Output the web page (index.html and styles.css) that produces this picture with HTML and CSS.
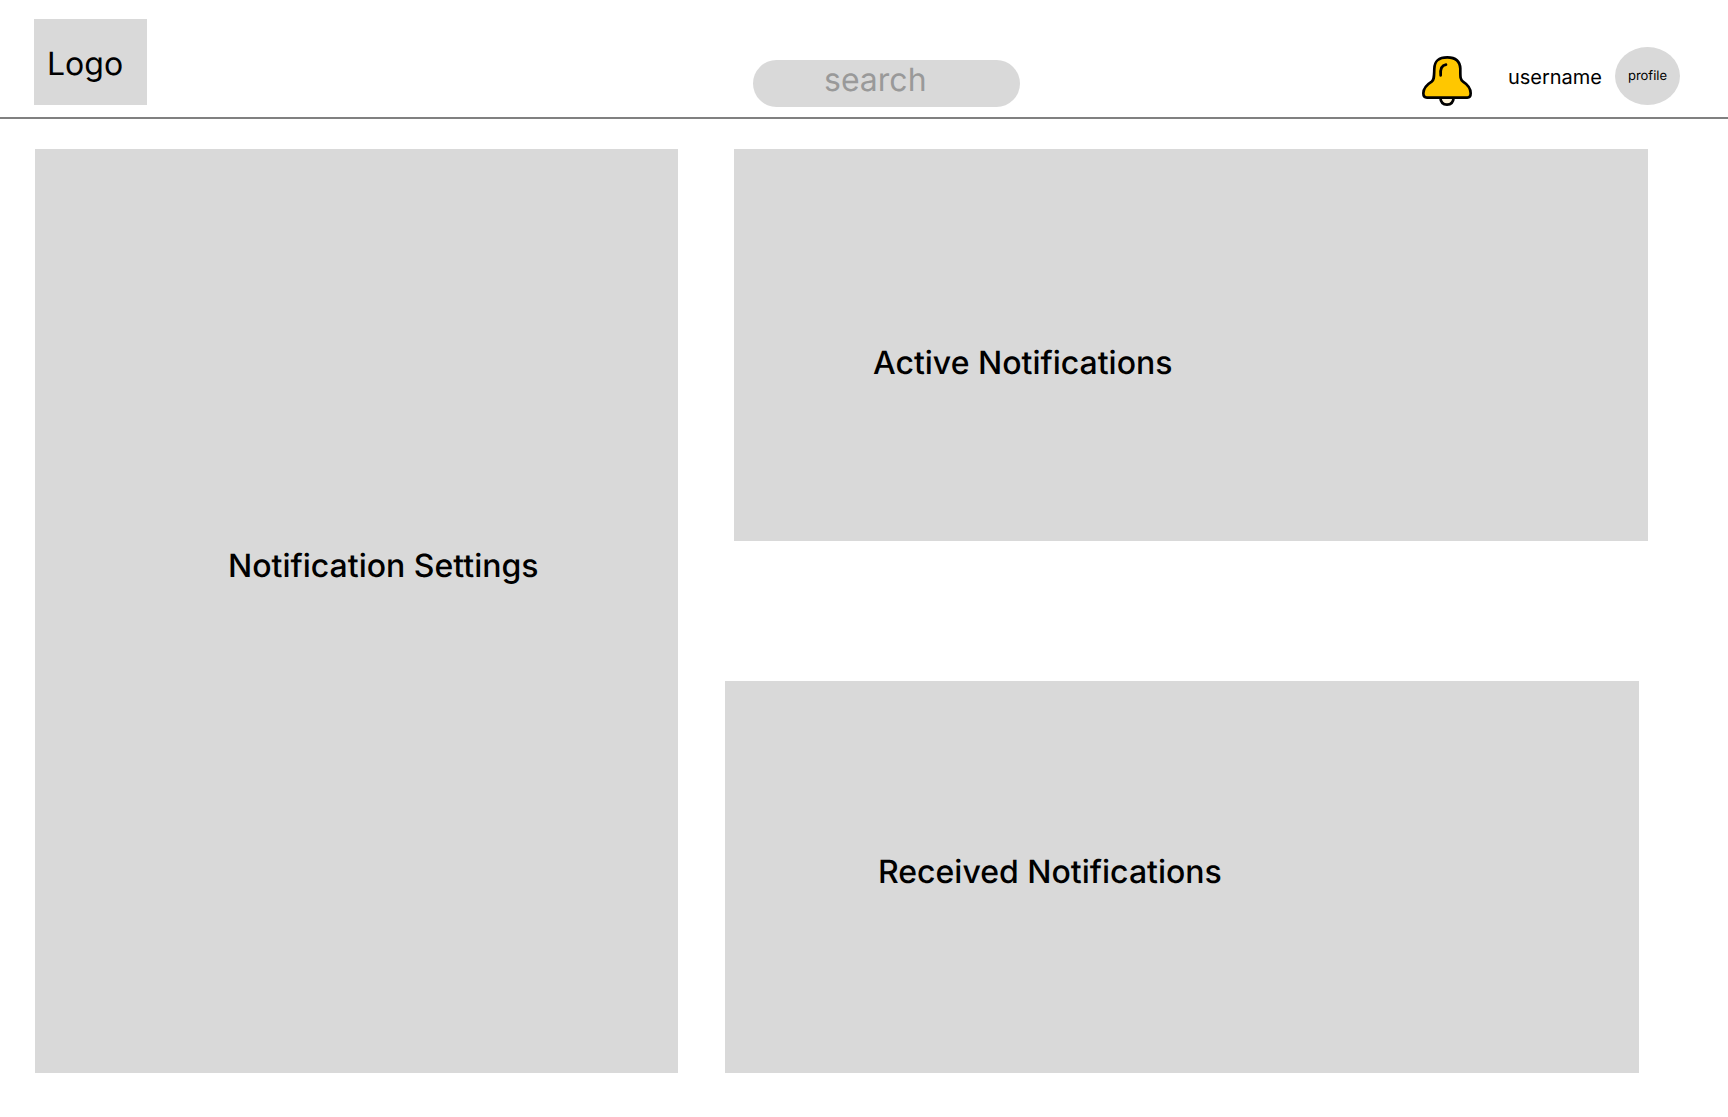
FILE: index.html
```html
<!DOCTYPE html>
<html lang="en">
<head>
  <meta charset="utf-8">
  <meta name="viewport" content="width=device-width, initial-scale=1">
  <title>Notifications</title>
  <link rel="stylesheet" href="styles.css">
</head>
<body>
  <header class="header">
    <a class="logo" href="#">Logo</a>
    <form class="search" role="search">
      <input class="search-input" type="search" aria-label="Search" placeholder="search">
    </form>
    <div class="account">
      <button class="bell" type="button" aria-label="Notifications">
        <svg class="bell-icon" viewBox="36 33 150 150" fill="none" stroke="#000" stroke-width="8" stroke-linecap="round" stroke-linejoin="round" aria-hidden="true">
          <path fill="#fff3d6" d="M91 158C92 172 100 179 111 179C122 179 130 172 131 158Z"/>
          <path fill="#ffc700" d="M51 158H172Q182 158 182 145C182 128 170 117 159 110C150 104 151 94 151 71C150 48 138 37 112 37C85 37 74 48 73 71C72 94 73 104 65 110C52 118 40 128 40 145Q40 158 51 158Z"/>
          <path d="M92 91C90 71 95 61 108 59"/>
        </svg>
      </button>
      <span class="username">username</span>
      <a class="profile" href="#">profile</a>
    </div>
  </header>
  <main class="main">
    <section class="panel settings">
      <h2 class="title">Notification Settings</h2>
    </section>
    <div class="lists">
      <section class="panel active">
        <h2 class="title">Active Notifications</h2>
      </section>
      <section class="panel received">
        <h2 class="title">Received Notifications</h2>
      </section>
    </div>
  </main>
</body>
</html>
```
FILE: styles.css
```css
* {
  box-sizing: border-box;
}

body {
  display: flex;
  flex-direction: column;
  min-height: 100vh;
  margin: 0;
  background: #fff;
  color: #000;
  font-family: Inter, "Liberation Sans", sans-serif;
  text-rendering: geometricPrecision;
}

.header {
  display: grid;
  grid-template-columns: 719fr 267px 660fr;
  align-items: end;
  padding: 19px 48px 10px 34px;
  border-bottom: 2px solid #808080;
}

.logo {
  justify-self: start;
  width: 113px;
  height: 86px;
  margin-bottom: 2px;
  padding: 25px 13px;
  background: #d9d9d9;
  color: inherit;
  font-size: 32px;
  line-height: 39px;
  text-decoration: none;
}

.search {
  display: flex;
}

.search-input {
  width: 100%;
  height: 47px;
  padding: 0 24px 8px 71px;
  border: 0;
  border-radius: 24px;
  background: #d9d9d9;
  color: #000;
  font: inherit;
  font-size: 32px;
  line-height: 39px;
  text-rendering: inherit;
  appearance: none;
}

.search-input::placeholder {
  color: #999;
  opacity: 1;
}

.account {
  display: flex;
  justify-content: flex-end;
  align-items: flex-end;
  margin-bottom: 1px;
}

.bell {
  width: 50px;
  height: 50px;
  margin-right: 36px;
  padding: 0;
  border: 0;
  background: none;
}

.bell-icon {
  display: block;
  width: 100%;
  height: 100%;
}

.username {
  margin: 0 13px 17px 0;
  font-size: 20px;
  line-height: 24px;
}

.profile {
  width: 65px;
  height: 58px;
  margin-bottom: 1px;
  border-radius: 50%;
  background: #d9d9d9;
  color: inherit;
  font-size: 13px;
  line-height: 58px;
  text-align: center;
  text-decoration: none;
}

.main {
  display: grid;
  flex: 1;
  grid-template-columns: 643fr 923fr;
  gap: 47px;
  padding: 30px 80px 44px 35px;
}

.lists {
  display: grid;
  grid-template-rows: 1fr 1fr;
  gap: 140px;
}

.panel {
  background: #d9d9d9;
}

.title {
  margin: 0;
  font-size: 32px;
  font-weight: 500;
  line-height: 39px;
}

.settings {
  padding: 397px 24px 24px 193px;
}

.active {
  margin-left: 9px;
  padding: 194px 24px 24px 139px;
}

.received {
  margin-right: 9px;
  padding: 171px 24px 24px 153px;
}
```
